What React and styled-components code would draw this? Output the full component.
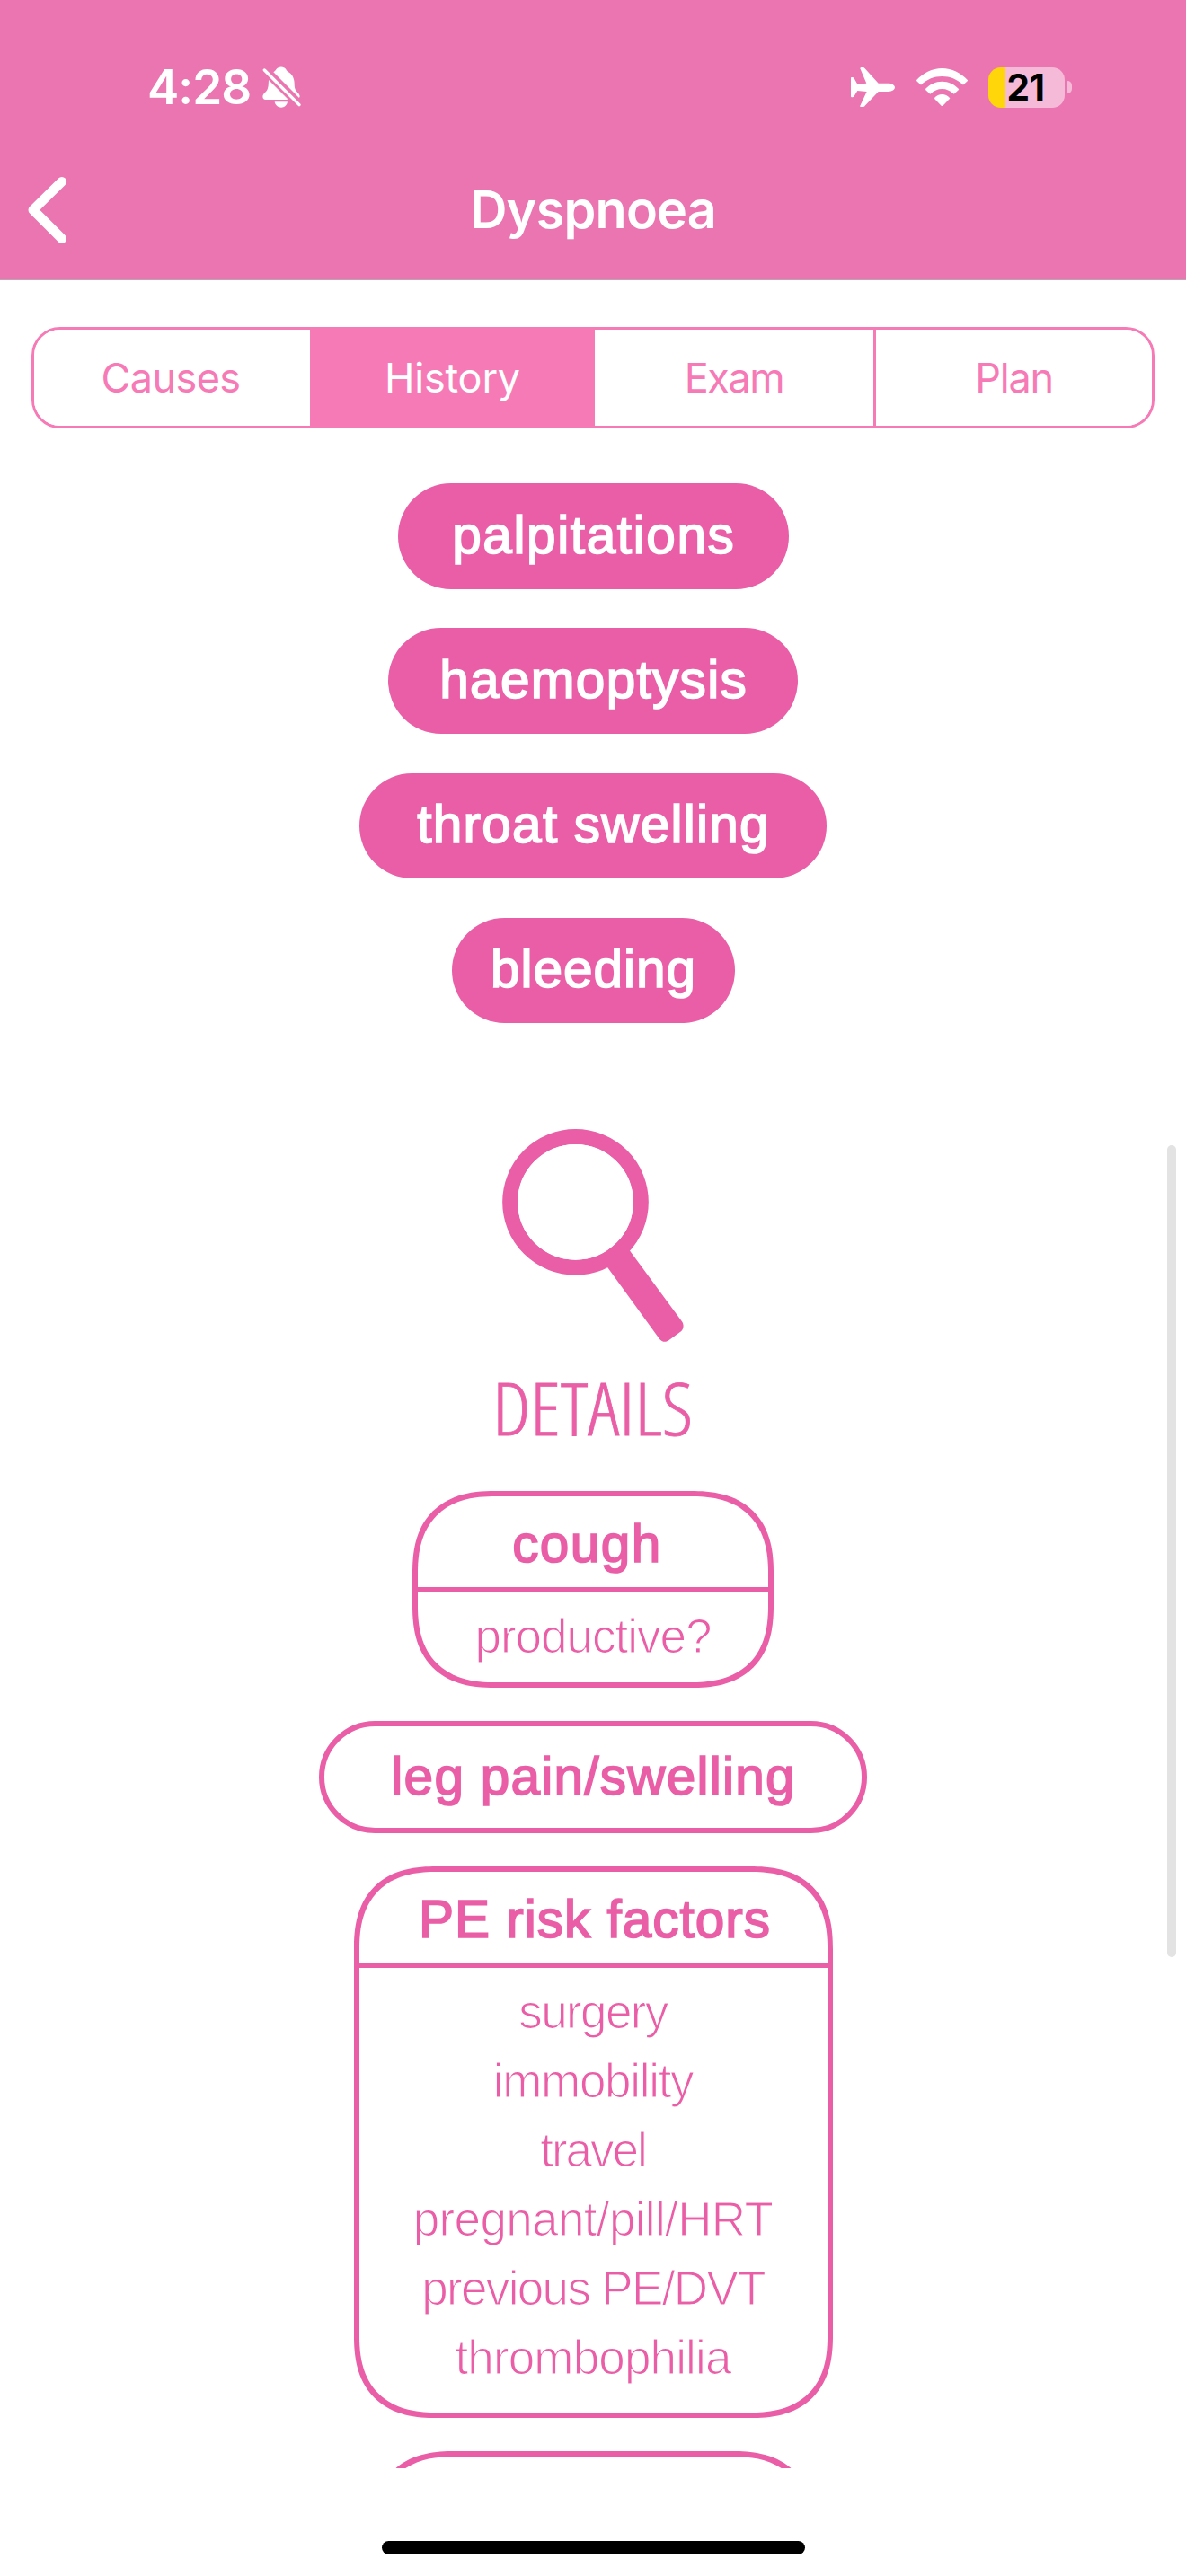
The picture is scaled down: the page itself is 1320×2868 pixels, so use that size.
import React from "react";
import styled, { createGlobalStyle } from "styled-components";

const PINK = "#e95ea6";
const TAB_PINK = "#f67ab6";
const BAR_PINK = "#eb75b0";
const SANS = `"Liberation Sans", Arial, sans-serif`;
const UI = `Inter, "Liberation Sans", sans-serif`;

const GlobalStyle = createGlobalStyle`
  * { box-sizing: border-box; }
  html, body { margin: 0; padding: 0; background: #fff; }
`;

const Screen = styled.div`
  position: relative;
  width: 1320px;
  height: 2868px;
  display: flex;
  flex-direction: column;
  overflow: hidden;
  background: #fff;
`;

const Header = styled.header`
  height: 312px;
  flex: none;
  background: ${BAR_PINK};
  border-bottom: 1px solid #b9a6b0;
  color: #fff;
  font-family: ${UI};
`;

const StatusBar = styled.div`
  height: 156px;
  display: flex;
  align-items: flex-start;
  justify-content: space-between;
  padding: 66px 127px 0 164px;
`;

const StatusGroup = styled.div`
  display: flex;
  align-items: center;
  height: 62px;
  gap: ${(p) => p.$gap}px;
`;

const Clock = styled.span`
  font-size: 53px;
  line-height: 62px;
  font-weight: 600;
  letter-spacing: -1px;
`;

const StatusIcons = styled.div`
  display: flex;
  align-items: center;
  height: 62px;
`;

const Glyph = styled.svg`
  display: block;
  flex: none;
  margin-right: ${(p) => p.$after || 0}px;
`;

const Battery = styled.div`
  width: 85px;
  height: 45px;
  margin-right: 3px;
  border-radius: 14px;
  background: linear-gradient(to right, #ffd60a 18px, #f5bad7 18px);
  color: #000;
  font-size: 40.5px;
  font-weight: 700;
  line-height: 46px;
  letter-spacing: -0.6px;
  padding-left: 20.5px;
`;

const BatteryNub = styled.div`
  width: 5px;
  height: 14px;
  border-radius: 0 5px 5px 0;
  background: #f5bad7;
`;

const NavBar = styled.nav`
  height: 155px;
  display: grid;
  grid-template-columns: 200px 1fr 200px;
  align-items: start;
`;

const BackButton = styled.button`
  border: 0;
  margin: 0;
  padding: 40px 0 0 30px;
  background: none;
`;

const Title = styled.h1`
  margin: 0;
  padding-top: 42px;
  text-align: center;
  font-size: 57.5px;
  line-height: 70px;
  font-weight: 600;
  letter-spacing: -0.8px;
`;

const Tabs = styled.div`
  flex: none;
  margin: 52px 35px 0;
  height: 113px;
  display: grid;
  grid-template-columns: 307px 317px 310px 1fr;
  border: 3px solid ${TAB_PINK};
  border-radius: 32px;
  overflow: hidden;
`;

const Tab = styled.button`
  border: 0;
  border-left: ${(p) => (p.$divider ? 3 : 0)}px solid ${TAB_PINK};
  padding: 0 ${(p) => p.$inset || 0}px 1px 0;
  background: ${(p) => (p.$active ? TAB_PINK : "#fff")};
  color: ${(p) => (p.$active ? "#fff" : TAB_PINK)};
  font-family: ${UI};
  font-size: 45px;
  font-weight: 400;
  letter-spacing: ${(p) => p.$track || 0}px;
`;

const Scroller = styled.main`
  height: 2271px;
  flex: none;
  overflow: hidden;
  padding-top: 61px;
  display: flex;
  flex-direction: column;
  align-items: center;
  color: ${PINK};
  font-family: ${SANS};
`;

const PillList = styled.div`
  display: flex;
  flex-direction: column;
  align-items: center;
  gap: 43.7px;
`;

const Heading = styled.span`
  font-family: ${SANS};
  font-size: 58.5px;
  line-height: 70px;
  font-weight: 400;
  white-space: pre;
  -webkit-text-stroke: 1.7px currentColor;
  letter-spacing: ${(p) => p.$track || 0}px;
  margin-right: ${(p) => -(p.$track || 0)}px;
`;

const Pill = styled.div`
  width: ${(p) => p.$w}px;
  height: 117.6px;
  flex: none;
  display: flex;
  justify-content: center;
  padding-top: 22.5px;
  border-radius: 59px;
  background: ${PINK};
  color: #fff;
`;

const Section = styled.section`
  display: flex;
  flex-direction: column;
  align-items: center;
  padding-top: 116.5px;
`;

const SectionTitle = styled.h2`
  margin: 16px 0 0;
  height: 110px;
  font-family: "Open Sans", sans-serif;
  font-size: 81px;
  line-height: 110px;
  font-weight: 300;
  font-stretch: 75%;
  -webkit-text-stroke: 0.8px currentColor;
  transform: scaleX(1.065);
`;

const CardList = styled.div`
  display: flex;
  flex-direction: column;
  align-items: center;
  padding-top: 38px;
  gap: 37px;
`;

const Card = styled.article`
  width: ${(p) => p.$w}px;
  height: ${(p) => p.$h}px;
  flex: none;
  display: flex;
  flex-direction: column;
  border: 6px solid ${PINK};
  border-radius: 76px;

  @supports (corner-shape: superellipse(1.5)) {
    border-radius: ${(p) => (p.$round ? 76 : 92)}px;
    corner-shape: ${(p) => (p.$round ? "round" : "superellipse(1.3)")};
  }
`;

const CardHead = styled.div`
  height: ${(p) => (p.$divided ? 107 : 113)}px;
  flex: none;
  display: flex;
  justify-content: center;
  padding-top: ${(p) => (p.$divided ? 18 : 21)}px;
  padding-left: ${(p) => (p.$divided ? 3 : 0)}px;
  border-bottom: ${(p) => (p.$divided ? 6 : 0)}px solid ${PINK};
`;

const CardBody = styled.ul`
  margin: 0;
  padding: 10px 0 0;
  list-style: none;
`;

const CardItem = styled.li`
  height: 77px;
  line-height: 77px;
  text-align: center;
  font-size: 53px;
  white-space: nowrap;
  -webkit-text-stroke: 1.2px #fff;
  letter-spacing: ${(p) => p.$track || 0}px;
`;

const ScrollThumb = styled.div`
  position: absolute;
  right: 11px;
  top: 1275px;
  width: 10px;
  height: 904px;
  border-radius: 5px;
  background: #e3e3e3;
`;

const Footer = styled.footer`
  flex: 1;
  display: flex;
  justify-content: center;
  align-items: flex-end;
  padding-bottom: 24px;
`;

const HomeBar = styled.div`
  width: 471px;
  height: 15px;
  border-radius: 8px;
  background: #000;
`;

const BellOff = () => (
  <Glyph width="44" height="47" viewBox="880 105 132 141" fill="#fff">
    <path d="M917 124 C922 121 924 118 926 115 C934 104 952 104 959 115 C961 119 963 121 966 123 C980 130 987 146 987 162 C987 178 990 184 997 191 C1002 196 1005 200 1005 205 L1003 210 Z" />
    <path d="M901 150 L964 213 C964 216 962 216 958 216 H891 C879 216 879 201 886 195 C897 185 898 180 900 168 Z" />
    <path d="M887 117 L1003 233" fill="none" stroke="#fff" strokeWidth="10" strokeLinecap="round" />
    <path d="M921 223 H964 C962 235 953 242 943 242 C933 242 923 235 921 223 Z" />
  </Glyph>
);

const Plane = () => (
  <Glyph $after={24} width="49" height="44" viewBox="141 108 147 132" fill="#fff">
    <path d="M172 112 C172 109 174 108 179 108 C184 108 186 109 188 112 L233 161 H266 C279 161 288 168 288 175 C288 182 279 189 266 189 H233 L188 236 C186 239 184 240 180 240 H175 C172 240 171 239 172 236 L194 189 L163 186 L152 204 C150 207 148 208 144 208 C142 208 141 207 141 205 V144 C141 142 142 141 145 141 C149 141 151 143 152 145 L163 164 L193 161 Z" />
  </Glyph>
);

const Wifi = () => (
  <Glyph $after={23} width="57" height="42" viewBox="360 105 171 126" fill="#fff">
    <path d="M360 145 C383 120 413 105 445.500 105 C478 105 508 120 531 145 C532 146 531 147 530 148 L518 159 C516 161 515 160 514 159 C496 142 472 132 445.500 132 C419 132 395 142 377 159 C376 160 375 161 373 159 L361 148 Z" />
    <path d="M390 174 C405 158 424 149 445.500 149 C467 149 486 158 501 174 C502 175 501 177 500 178 L487 190 C486 191 484 191 483 190 C473 180 460 174 445.500 174 C431 174 418 180 408 190 C407 191 405 191 404 190 L391 178 Z" />
    <path d="M420 204 C427 196 436 192 445.500 192 C455 192 464 196 471 204 C472 205 472 206 470 208 L448 230 C446 232 445 232 443 230 L421 208 Z" />
  </Glyph>
);

const Chevron = () => (
  <Glyph width="46" height="76" viewBox="30 196 46 76">
    <path
      d="M68.800 202.200 L36.800 233.700 L68.800 265.700"
      fill="none"
      stroke="#fff"
      strokeWidth="10.600"
      strokeLinecap="round"
      strokeLinejoin="round"
    />
  </Glyph>
);

const Magnifier = () => (
  <Glyph width="204" height="240" viewBox="174 108 612 720">
    <circle cx="421.500" cy="355" r="218.500" fill="none" stroke={PINK} strokeWidth="51" />
    <path
      d="M604 519 L778 755 C784 765 783 778 774 787 L734 816 C724 824 710 823 702 812 L530 575 L500 540 L570 480 Z"
      fill={PINK}
    />
    <circle cx="421.500" cy="355" r="193" fill="#fff" />
  </Glyph>
);

const tabs = [
  { label: "Causes", track: -0.6, inset: 3 },
  { label: "History", track: -0.2, active: true },
  { label: "Exam", track: -1.4 },
  { label: "Plan", track: -1.2, divider: true },
];

const symptoms = [
  { label: "palpitations", w: 435, track: 1.6 },
  { label: "haemoptysis", w: 456, track: 1.3 },
  { label: "throat swelling", w: 520, track: 1.24 },
  { label: "bleeding", w: 315, track: 1 },
];

const cards = [
  { title: "cough ", w: 402, h: 219, track: 1.4, items: [{ label: "productive?", track: -1 }] },
  { title: "leg pain/swelling", w: 610, h: 125, track: 1.25 },
  {
    title: "PE risk factors",
    w: 533,
    h: 614.5,
    track: 1,
    items: [
      { label: "surgery", track: -1.6 },
      { label: "immobility", track: -1.3 },
      { label: "travel", track: -2 },
      { label: "pregnant/pill/HRT", track: -0.65 },
      { label: "previous PE/DVT", track: -1.65 },
      { label: "thrombophilia", track: -0.85 },
    ],
  },
  { title: "", w: 493, h: 219, items: [] },
];

export default function App() {
  return (
    <Screen>
      <GlobalStyle />
      <Header>
        <StatusBar>
          <StatusGroup $gap={13}>
            <Clock>4:28</Clock>
            <BellOff />
          </StatusGroup>
          <StatusIcons>
            <Plane />
            <Wifi />
            <Battery>21</Battery>
            <BatteryNub />
          </StatusIcons>
        </StatusBar>
        <NavBar>
          <BackButton aria-label="Back">
            <Chevron />
          </BackButton>
          <Title>Dyspnoea</Title>
        </NavBar>
      </Header>
      <Tabs>
        {tabs.map((t) => (
          <Tab
            key={t.label}
            $active={t.active}
            $divider={t.divider}
            $inset={t.inset}
            $track={t.track}
          >
            {t.label}
          </Tab>
        ))}
      </Tabs>
      <Scroller>
        <PillList>
          {symptoms.map((s) => (
            <Pill key={s.label} $w={s.w}>
              <Heading $track={s.track}>{s.label}</Heading>
            </Pill>
          ))}
        </PillList>
        <Section>
          <Magnifier />
          <SectionTitle>DETAILS</SectionTitle>
        </Section>
        <CardList>
          {cards.map((c, i) => (
            <Card key={i} $w={c.w} $h={c.h} $round={!c.items}>
              <CardHead $divided={!!c.items}>
                <Heading $track={c.track}>{c.title}</Heading>
              </CardHead>
              {c.items && (
                <CardBody>
                  {c.items.map((it) => (
                    <CardItem key={it.label} $track={it.track}>
                      {it.label}
                    </CardItem>
                  ))}
                </CardBody>
              )}
            </Card>
          ))}
        </CardList>
      </Scroller>
      <Footer>
        <HomeBar />
      </Footer>
      <ScrollThumb />
    </Screen>
  );
}
